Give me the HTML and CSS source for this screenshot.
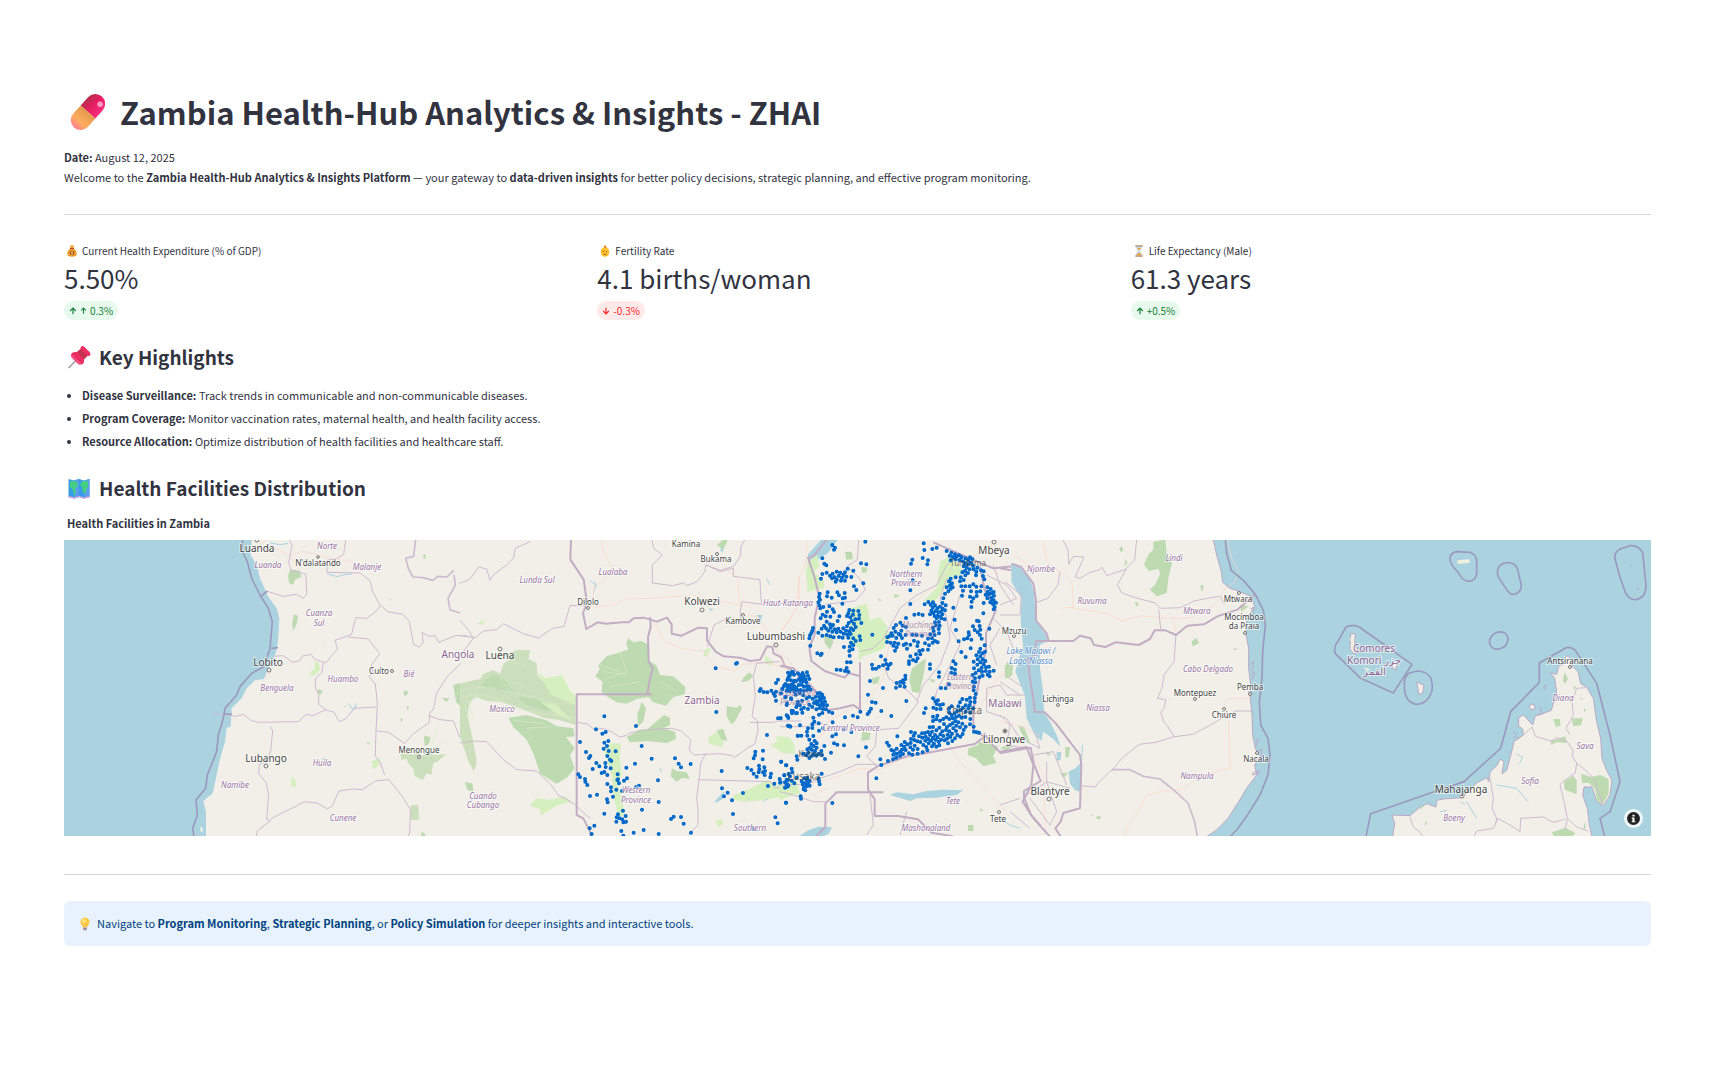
FILE: index.html
```html
<!DOCTYPE html>
<html lang="en">
<head>
<meta charset="utf-8">
<meta name="viewport" content="width=device-width, initial-scale=1">
<title>Zambia Health-Hub Analytics &amp; Insights - ZHAI</title>
<link rel="stylesheet" href="styles.css">
</head>
<body>
<main class="page">
  <h1 class="title">
    <svg class="title-icon" viewBox="0 0 42 42" aria-hidden="true">
      <defs>
        <linearGradient id="pill-red" x1="0" y1="0" x2="1" y2="0"><stop offset="0" stop-color="#b52f4c"/><stop offset=".5" stop-color="#ea1c62"/><stop offset="1" stop-color="#f5317f"/></linearGradient>
        <linearGradient id="pill-orange" x1="0" y1="0" x2="0" y2="1"><stop offset="0" stop-color="#e39a4c"/><stop offset=".6" stop-color="#ffac5e"/><stop offset="1" stop-color="#ff7f92"/></linearGradient>
      </defs>
      <g transform="rotate(42 21 21)">
        <path d="M12 21V11a9 9 0 0 1 18 0V21z" fill="url(#pill-red)"/>
        <path d="M12 21v10a9 9 0 0 0 18 0V21z" fill="url(#pill-orange)"/>
      </g>
      <circle cx="32" cy="14" r="2.500" fill="#ff9cc4"/>
    </svg>
    <span>Zambia Health-Hub Analytics &amp; Insights - ZHAI</span>
  </h1>
  <p class="intro"><strong>Date:</strong> August 12, 2025<br>Welcome to the <strong>Zambia Health-Hub Analytics &amp; Insights Platform</strong> — your gateway to <strong>data-driven insights</strong> for better policy decisions, strategic planning, and effective program monitoring.</p>
  <hr class="rule">

  <section class="metrics" aria-label="Key metrics">
    <div class="metric">
      <p class="metric-label">
        <svg class="emoji-small" viewBox="0 0 12 12" aria-hidden="true"><path d="M4 .5h4L7.500 3.500C10 5 11 7 10.700 9.500 10.500 11 9 11.700 6 11.700S1.500 11 1.300 9.500C1 7 2 5 4.500 3.500z" fill="#eda02f"/><path d="M4 3h4v1H4z" fill="#b5452c"/><circle cx="6" cy="7.800" r="2.400" fill="#a55a24"/><path d="M7 6.700c-2-1-2.200 1-1 1.100s1 2-1 1.100M6 6v3.600" fill="none" stroke="#ffd05a" stroke-width=".6"/></svg>
        Current Health Expenditure (% of GDP)</p>
      <p class="metric-value">5.50%</p>
      <p class="delta delta-up"><svg class="arrow" viewBox="0 0 10 10" aria-hidden="true"><path d="M5 9V1.500M1.500 5 5 1.500 8.500 5"/></svg><svg class="arrow arrow-small" viewBox="0 0 10 10" aria-hidden="true"><path d="M5 9.500V1.500M1.500 5 5 1.500 8.500 5"/></svg>0.3%</p>
    </div>
    <div class="metric">
      <p class="metric-label">
        <svg class="emoji-small" viewBox="0 0 12 12" aria-hidden="true"><ellipse cx="6" cy="7" rx="4.300" ry="4.800" fill="#fcc02e"/><path d="M6 3C4 2 5 .5 6.500 0 6 1 8 1.500 7.500 3z" fill="#d98a28"/><path d="M4 6.500h1M7 6.500h1M4.800 9q1.200 1 2.400 0" fill="none" stroke="#6d3c22" stroke-width=".8"/></svg>
        Fertility Rate</p>
      <p class="metric-value">4.1 births/woman</p>
      <p class="delta delta-down"><svg class="arrow" viewBox="0 0 10 10" aria-hidden="true"><path d="M5 1v7.500M1.500 5 5 8.500 8.500 5"/></svg>-0.3%</p>
    </div>
    <div class="metric">
      <p class="metric-label">
        <svg class="emoji-small" viewBox="0 0 12 12" aria-hidden="true"><path d="M3 1.500h6c0 3-2 3.500-2 4.500s2 1.500 2 4.500H3C3 7.500 5 7 5 6S3 4.500 3 1.500z" fill="#bfdcec"/><path d="M4 3h4L6 5.500zM3.500 10c0-1.500 1.500-2 2.500-2s2.500.5 2.500 2z" fill="#f2a63a"/><path d="M2.300.300h7.400v1.400H2.300zM2.300 10.300h7.400v1.400H2.300z" fill="#b98d6b"/></svg>
        Life Expectancy (Male)</p>
      <p class="metric-value">61.3 years</p>
      <p class="delta delta-up"><svg class="arrow" viewBox="0 0 10 10" aria-hidden="true"><path d="M5 9V1.500M1.500 5 5 1.500 8.500 5"/></svg>+0.5%</p>
    </div>
  </section>

  <h2 class="heading">
    <svg class="heading-icon" viewBox="0 0 24 24" aria-hidden="true"><path d="M1.500 23 11 13.500" stroke="#a39aa8" stroke-width="1.600"/><path d="M13.500 2.500q1-2.500 3.500-1l6 6q1.500 2.500-1 3.500l-2-.2-3 3.200q.5 5-2.500 5.500L4 9.500q.5-3 6-2.500l3.500-3z" fill="#ee2d63"/><path d="m13.500 4 7 7-3.500 3.500L10 7z" fill="#c53451"/><path d="M4 9.500 14.500 19.500q-2 1-4-1L5 13q-2-2-1-3.500z" fill="#f5467c"/></svg>
    <span>Key Highlights</span>
  </h2>
  <ul class="highlights">
    <li><strong>Disease Surveillance:</strong> Track trends in communicable and non-communicable diseases.</li>
    <li><strong>Program Coverage:</strong> Monitor vaccination rates, maternal health, and health facility access.</li>
    <li><strong>Resource Allocation:</strong> Optimize distribution of health facilities and healthcare staff.</li>
  </ul>

  <h2 class="heading heading-map">
    <svg class="heading-icon" viewBox="0 0 24 24" aria-hidden="true"><path d="M1.500 3 7 4.500 12 3l5 1.500L22.500 3v18L17 22.500 12 21l-5 1.500L1.500 21z" fill="#399ce8"/><path d="M7 4.500 12 3v18l-5 1.500zM17 4.500 22.500 3v18L17 22.500z" fill="#5b9df0"/><path d="M1.500 20.500 7 22l5-1.500 5 1.500 5.500-1.500" fill="none" stroke="#c8a4dc" stroke-width="1.300"/><path d="M3 6q3-2 7 0l1 4-3 3 1 3-2 4-1-6-3-3zM13 9l2-4h6v6l-2 3v4l-3-2-1-5z" fill="#43cf83"/></svg>
    <span>Health Facilities Distribution</span>
  </h2>

  <figure class="map">
    <figcaption class="map-title">Health Facilities in Zambia</figcaption>
    <div class="map-frame">
    <svg class="map-canvas" viewBox="64 540 1587 296" role="img" aria-label="Map of health facilities in Zambia">
      <rect class="land" x="64" y="540" width="1587" height="296"/>

      <!-- Angola and the Atlantic coast -->
      <g transform="translate(60 535) scale(.33333)">
        <path class="water" d="M12 14H575L572 60 590 90 600 130 625 185 650 220 658 250 655 310 650 345 640 375 625 400 612 432 585 436 560 460 545 490 515 520 512 575 500 578 495 620 478 680 470 720 458 775 430 798 438 830V905H12z"/>
        <path class="stream" d="M630 24l30 5 25-4M802 117l30 8 20-6 25-3M865 505l15 20 8-10M880 525l10-20M780 680l15-15"/>
        <path class="wood" d="M690 105l30 2 4 20-18 6-6 16-12-3-4-22zM702 238l12 4-4 25-10 20-4-20zM1090 58l8 2-2 12-6-2zM775 462l14 6-8 12-10-6zM1033 465l12 6-8 14-6-8zM1040 512l8 4-6 10zM1022 548l8 6-8 6zM920 620l10 4-6 6zM1092 602l20 4-6 22-12 6zM1145 488l24 2-10 12zM1180 450l20-6v70l-12-14zM988 190l6 4-5 3zM858 515l-12 4 10-6zM1085 890l12 8-2 7-12-2z"/>
        <path class="wood sparse" d="M1022 655l40 4 10-16 14 20 24-22 10 20 40-4-26 22-14 6-6 34-14-4-12 20-24-12-4-22-16-18-4-12-16 4z"/>
        <path class="wood sparse" d="M1052 810h22l4 44-28 1z"/>
        <path class="grass" d="M765 378l12 6 3 20-14 16-16 4 4-16 10-6zM695 722l14 20-2 14-14-4zM935 680l24-12 2 16-20 20zM790 315l6 6-4 6zM597 470l8 4-4 8z"/>
        <path class="scrub" d="M1090 600l20-24M1110 640l26-70M1100 650l60-30"/>
        <path class="road" d="M585 14l20 14 10-12M595 35l60 10 35 15 40-12 60 16 90 18M690 60l30 50M612 432l20-22"/>
        <path class="admin" d="M688 14l8 18-10 50 6 22 46 14 2 60-10 12-20-12-40 6-48-15-24 14M857 14l-6 44-20 12-30 6 0 36 100 2 30 24 6 30 24 44-10 14-30 24-34-2-12 50-50 18 8 26-20 22-15 20-35-12-10-14-26 5-8 14-22 5-12-10-16-10-30 2M865 306l60 6 34 44-24 34 4 22-12 12 20 26M790 382l-4 30-20 20 0 26 10 20 0 30 22 16-40 18-20-4-22 22-120 2-20-4-26-20-24 6-32-6-34-1M797 524l26 8 14 28 20-8 26-32 65-4M630 573l8 15-6 60-10 28-24 12-2 28 22 26 8 36-6 75 12 4-40 30-4 26M632 852l30-16 30-14 40-22 40 4 30 18 15-10 20-44 40-6 30 2 40-26 40-4 40 50 24 40-2 70-18 36"/>
        <path class="admin" d="M946 446l6 60-4 82-2 76 14 16 14 40M950 588l36 4 22 16 26 18 24-28 50-36 2-30 10-8 10-50 32-50 42-40M1106 542l34 12 40 4 20 50M962 210l20 20 46 8 20 20 12 70 18 8 12-14-4-30 20 12 20-2 10 20 50-20h34"/>
        <path class="admin strong-admin" d="M1067 14l-6 50-24 6 8 30 14 26 30 2 30 8 14-12 28 2 20-20M1182 120l4 30-22 40 6 34 30 10"/>
        <path class="sea-border" d="M548 14l-3 31 17 35 13 50 25 50 25 40 12 40-7 80-18 55-37 20-35 40-10 25-35 40-5 30-15 50-5 50-28 70-5 40-29 35 4 45-14 40 4 25M606 182l16-14M634 340l20-2M494 537h22"/>
        <path class="islet" d="M420 876l8 2v14l-6-2z"/>
      </g>

      <!-- Eastern Angola, Katanga, western Zambia -->
      <g transform="translate(460 535) scale(.33333)">
        <path class="wood" d="M505 310L520 322 545 318 566 330 566 376 590 392 600 420 640 424 676 456 674 478 640 486 618 512 580 502 565 486 530 492 500 506 470 502 440 484 425 470 428 440 406 424 420 402 414 392 440 364 480 352 505 344 498 326z"/>
        <path class="wood" d="M545 500L558 520 550 560 534 574 532 540zM560 584L612 540 630 548 630 570 600 584zM500 606L540 584 610 580 646 590 648 612 620 624 560 618 510 622zM800 514l30 4 10-8 6 10-22 40-10 8-14-24zM850 428l18-16 12 12-16 14-20 4zM770 586l20-4 12 36-18-4zM636 700l14 8 30 4 10 20-24-4-16 12-18-16z"/>
        <path class="wood" d="M145 548L200 540 260 556 290 574 340 580 344 604 318 606 344 640 330 660 344 700 320 728 290 746 240 716 222 660 200 614 160 576zM14 740l24 6 2 24-18-6zM770 30l20-16h14l-14 30z"/>
        <path class="wood sparse" d="M0 446L20 440 60 432 70 416 100 406 120 416 132 384 150 374 130 360 175 344 210 346 206 372 230 384 232 420 260 450 300 460 330 480 346 500 346 570 300 556 250 548 180 520 120 500 80 498 50 486 30 500 22 540 40 620 50 680 42 710 26 680 0 604z"/>
        <path class="wood" d="M170 486L230 492 290 520 260 528 200 510zM60 450L100 416 140 440 160 470 110 468z"/>
        <path class="grass" d="M232 410l24 20 50-10 20 40 24 30-6 20-70-30-30-50zM240 500l50 10 50 50-50-24zM455 624l28 2-4 40 6 50-10 40 14 44 2 42-16 4-14-60-4-60-16-50-10-30zM932 630l20-10-4-16 26 4 28 20 4 30-40-6zM745 606l26-14 20 30-4 14-40-10zM228 790l36 4 50-10 20 16-40 10-50 30-8-20-26-6zM765 856l20-4 6 14-14 12zM735 342l20-4-14 24-12 4zM820 780l40-14 60-30 30 16 60-16 10 40-60 10-50 10-60 4-30-6zM50 266l24-10-6 14zM915 360l24 20-6 14-18-10z"/>
        <path class="scrub" d="M0 470c60-30 130 0 190 10s90 40 150 20M0 490c50-20 90-10 150 20s100 20 190 40M10 500l20 50M20 490l20 60M120 430l30 40M160 440l60 30M60 450l-30 60M140 380l60 10M10 460l50 30M160 556l90 10M200 580l80-6M420 390l60 20M430 410l70 10M440 430l60-20M480 350l20 60M450 455l90-15M600 440l50 30"/>
        <path class="water" d="M762 802l30-34-4 24-18 10zM780 44l10-10-2 20zM890 240h18l-6 16zM745 220l16 2-6 6z"/>
        <path class="stream" d="M390 136l16 14-4 20M404 140l6 16M910 800l14-10M920 130l10 20M714 170l4 4M600 700l4 10"/>
        <path class="road" d="M425 14l6 40 26 44-20 30-34 30-8 40 0 18 60-4 40-20 80-2 120-10 60 14 80 14 40 10M776 60l30 50 28 20 4 70 6 36 50 10 40 60 14 40 30 20 30 40M575 250l40 70 50 20 70 10 30 44 60 14 20-20 80-4 60 20 30 10M1018 120v80l-20 40-40 60-10 26"/>
        <path class="admin" d="M210 20l-44 20-6 30-20 20-40 30-10 16-10-34-24-6-26 36-32 14M330 212h50M330 212l-18 62-34 6-30 20-10 10-48-14-60-30-20 18-40 4-24 20-46-6M0 256l26 30 14 24-30 40-10 10M575 14l6 26 26 20-30 30 0 54 60 8 34-8 10 8 30-12 24-30 2-20 44 16 40-12 20-30 2-30 24-40M740 90l40 20 40-10 0 24 80 10 2 50 4 24-60-8-6 30 4 30-16 0-18-14-48 24-20 64M0 624l44-6 36 2 50 54 40 30 60 4 42 40 24 34 22 10 26 16 42 40 6 0"/>
        <path class="admin" d="M350 562l30 4 24 18 24-4 30 12 20 14 20-4 12-8 34-8 50-4 40-2 30 8 28 26-4 30 14 16 36-2 40-2 40 6 6 6 40-30 20-10 10-40-2-30-16-14 10-60-6-60 10-40 70-4M738 654l-16 30-4 46-8 60 4 30 0 50-30 30M712 734l220 6 14 20 30-10 44-2M870 562h70l16-4h66"/>
        <path class="nation" d="M333 14l-2 60 40 60 10 70-12 30 10 48 34-20 24 4 50-4 20 0 14-12 30-2 40 12 30-12 14 20 0 28 30 6 50-24 26 2 0 36 26 34 24 14 50 4 30 10 30-4 20-40 16 2 4 20 22 10 10 24 30 24 28 20M570 246l2 30-8 30 2 74 12 20-10 40-6 34 12 4H350v362l20 10 20 40 4 20"/>
      </g>

      <!-- Northern and central Zambia, lakes, Malawi -->
      <g transform="translate(780 535) scale(.33333)">
        <path class="water" d="M84 58l40-44h50l-30 40-24 16-20 16-14-6zM225 240l30-6 10 20-6 30-24 22-24-6 4-24zM330 780l20-8 50 6 40-10 50-4 60 2-20 14-60 8-60 2-20 8zM56 905l30-20 30-10 40 2-10 20-24 10z"/>
        <path class="grass" d="M82 80l30-20 6 36-16 14 30 30 0 20-50 10 0-24-4-30zM480 80l30-18 44 50-40 20-30 40-20 30-34-4 40-40zM210 220l50-14 10 50 30-10 20 26 10 40-20 30-60 22-12 14-4-40-24-24zM0 604l30 4 14 24-20 24-24-4zM0 750l40 30-40 16z"/>
        <path class="wood" d="M396 400l42-30-6 44-14 60-22-4-8-36zM195 50h20l4 22-20 2zM132 300l20 0 8 20-10 24-16-20zM246 590l26 4-4 20-24 4zM565 640l30-10 0-10 60 14-16 30 10 20-40 10-20-24-26-10zM680 380l20 10-4 30-20-14zM276 430l24-6-6 20-16 4zM292 190l12 4-4 6zM340 178l20 2-14 10zM564 870h16v18h-16zM244 96l18 2-2 14-14 2zM600 820l10 4-8 6zM446 432l20 2-6 10z"/>
        <path class="road" d="M84 14l-10 80-18 40-4 80-50 80M0 370l40 50 60 60 60 90-80 70-70 110M640 14l-10 30-60 24-60 0M700 60l60 40 50 10M130 570l80-50 50-20 50-70 20-120 60-100 80-60 80-90M60 750l100-20 80-30 60 4 60-30 100-40 70-40 60-60 60-100 70-70 60-20M500 620l40 60 60 60 50 60 30 30M100 780l40-20"/>
        <path class="admin" d="M236 14l-4 60-30 20 40 40 14 30-30 34-90 10M240 350l40-10 30-30 50-90 50-40 60-30 30-60 40-30M240 384l0 140M312 390l14 40 60 40 30 30-60 80-60 4M0 575l80 0 50-10M290 584l-4 50-26 30 30 30M290 688l-60 0-50 22-60 20-40 20M500 130l-20 60 20 60 10 60-30 80-50 60-20 50M540 180l-30 100 30 50-30 60-40 80-10 40M620 120l60 30 30 40-50 20M640 250l40 40 24 60-30 70 60 40M620 460l40-10 20 30 60 0 40 60-20 40 20 60-60-30-40-60-60-20zM0 770l40 10 60 20 40 0M270 780l10 90-20 30M380 830l-20 70M640 90l20 60 40 60M660 280l-30 50 20 60"/>
        <path class="nation" d="M140 14l-40 50-16 4 20 60 14 60-14 60 0 50-16 40 6 40 40 30 60 20 12-14 34 10 0-40V524l-20-14-40 10-40 6-10-26-30-40-60-60-40-8M460 22l100 44 80 34 60-6 0 6M600 95l14 70 34 60-30 70 0 50-14 60-24 120 0 60 34 20-30 22-140 26-60 10-90 30-30 20 0 50 20 30 0 50 70 0 60 10 40 40 60 10 40 20M612 594l20 30 30 30 90-16 10 50 20 50-50 30 0 20 20 50 30 35M310 772l-140 0-34 34 0 70-30 30"/>
        <path class="dot" d="M157 30h0M165 38h0M162 44h0M256 20h0M127 70h0M133 86h0M139 91h0M203 101h0M243 85h0M259 88h0M220 107h0M127 117h0M123 131h0M140 113h0M150 122h0M158 116h0M164 127h0M170 110h0M176 123h0M181 113h0M186 128h0M191 119h0M195 112h0M199 125h0M183 137h0M170 134h0M167 140h0M156 130h0M214 126h0M195 137h0M250 145h0M222 154h0M229 165h0M119 176h0M117 186h0M120 194h0M115 202h0M118 211h0M121 220h0M130 216h0M141 184h0M143 172h0M155 188h0M172 172h0M177 181h0M188 190h0M194 174h0M187 206h0M195 188h0M158 223h0M148 214h0M141 230h0M128 239h0M137 244h0M122 250h0M151 245h0M162 231h0M178 244h0M173 258h0M140 260h0M150 268h0M132 272h0M125 281h0M138 280h0M145 287h0M152 278h0M159 270h0M157 290h0M164 283h0M170 292h0M175 281h0M182 290h0M190 280h0M191 296h0M198 287h0M202 299h0M208 289h0M213 280h0M201 274h0M212 297h0M220 285h0M206 264h0M215 258h0M222 266h0M227 276h0M211 247h0M201 243h0M208 225h0M205 235h0M220 227h0M219 239h0M235 228h0M238 240h0M226 253h0M237 251h0M244 264h0M99 279h0M97 287h0M94 294h0M90 301h0M88 310h0M91 332h0M115 293h0M127 302h0M140 300h0M151 304h0M161 307h0M177 306h0M188 308h0M205 308h0M220 310h0M227 318h0M239 304h0M241 315h0M220 330h0M213 323h0M209 335h0M218 343h0M208 348h0M209 362h0M192 336h0M112 355h0M122 360h0M125 356h0M201 382h0M212 382h0M200 399h0M205 410h0M195 408h0M182 405h0M170 404h0M277 299h0M431 25h0M433 45h0M457 42h0M470 38h0M397 74h0M393 86h0M428 69h0M444 76h0M442 88h0M398 136h0M391 166h0M391 207h0M500 48h0M514 53h0M509 62h0M519 66h0M525 58h0M530 64h0M537 61h0M545 66h0M512 76h0M527 73h0M539 75h0M549 79h0M557 70h0M565 75h0M570 67h0M577 72h0M555 85h0M565 88h0M573 83h0M579 92h0M551 94h0M560 98h0M569 103h0M555 108h0M547 112h0M564 114h0M556 121h0M581 103h0M589 110h0M588 121h0M603 106h0M611 109h0M609 123h0M613 133h0M592 98h0M542 127h0M551 135h0M527 127h0M512 131h0M507 139h0M516 145h0M510 151h0M500 157h0M512 161h0M505 169h0M495 176h0M518 157h0M540 139h0M544 154h0M556 154h0M569 154h0M580 148h0M549 167h0M573 169h0M590 171h0M570 185h0M580 190h0M546 182h0M590 183h0M575 200h0M589 155h0M601 169h0M604 154h0M617 179h0M622 157h0M632 162h0M623 170h0M627 178h0M634 174h0M641 171h0M642 182h0M634 188h0M641 196h0M648 203h0M639 207h0M644 216h0M631 202h0M622 190h0M641 223h0M635 194h0M611 204h0M574 216h0M520 218h0M490 190h0M487 204h0M497 211h0M434 208h0M445 201h0M452 209h0M459 202h0M465 211h0M458 218h0M472 220h0M480 215h0M488 221h0M467 228h0M475 232h0M483 230h0M460 234h0M454 227h0M450 238h0M464 243h0M473 242h0M481 245h0M487 238h0M495 226h0M470 250h0M484 250h0M494 253h0M465 262h0M477 261h0M479 272h0M468 271h0M459 278h0M476 282h0M461 289h0M451 298h0M464 300h0M477 295h0M456 310h0M465 318h0M473 322h0M458 323h0M447 331h0M444 311h0M416 237h0M428 240h0M403 239h0M378 249h0M361 263h0M368 272h0M378 276h0M348 270h0M341 279h0M346 290h0M334 295h0M328 304h0M322 307h0M338 302h0M349 309h0M356 297h0M364 287h0M377 300h0M366 309h0M361 300h0M321 321h0M332 323h0M344 323h0M340 332h0M350 337h0M345 347h0M355 326h0M371 330h0M381 341h0M378 326h0M391 329h0M402 317h0M409 300h0M397 299h0M414 322h0M426 302h0M412 333h0M428 345h0M444 344h0M435 325h0M418 348h0M421 358h0M408 358h0M413 370h0M408 379h0M391 364h0M399 375h0M387 387h0M387 379h0M303 364h0M316 375h0M309 391h0M319 387h0M326 391h0M332 386h0M297 395h0M288 401h0M276 389h0M278 401h0M323 401h0M270 438h0M264 479h0M276 501h0M287 503h0M268 530h0M263 537h0M273 521h0M304 528h0M334 543h0M309 459h0M379 498h0M360 453h0M348 458h0M350 444h0M361 441h0M369 436h0M376 432h0M376 422h0M371 444h0M374 455h0M450 388h0M450 401h0M477 412h0M477 425h0M483 459h0M497 460h0M507 448h0M515 399h0M525 404h0M514 413h0M525 416h0M527 387h0M520 379h0M544 351h0M557 366h0M536 319h0M528 285h0M524 254h0M610 235h0M591 257h0M596 259h0M579 274h0M599 273h0M566 292h0M584 285h0M593 292h0M601 284h0M628 281h0M567 300h0M600 300h0M552 313h0M562 310h0M574 314h0M605 311h0M614 331h0M601 341h0M572 340h0M615 350h0M608 355h0M597 351h0M589 361h0M601 364h0M593 373h0M608 373h0M581 380h0M601 382h0M616 378h0M592 389h0M611 388h0M605 398h0M618 397h0M627 395h0M596 406h0M582 400h0M587 414h0M606 410h0M617 408h0M629 410h0M641 407h0M623 419h0M608 422h0M598 427h0M629 424h0M585 430h0M578 420h0M578 440h0M586 442h0M582 455h0M581 466h0M587 477h0M584 489h0M570 488h0M584 501h0M560 494h0M571 501h0M557 511h0M569 511h0M579 520h0M565 520h0M549 518h0M557 530h0M571 533h0M547 492h0M540 502h0M535 514h0M542 525h0M532 528h0M524 535h0M515 541h0M508 533h0M507 521h0M515 514h0M459 490h0M466 499h0M474 496h0M470 507h0M480 510h0M482 522h0M489 508h0M470 522h0M460 518h0M437 520h0M432 534h0M459 545h0M472 542h0M459 558h0M469 553h0M480 557h0M490 552h0M499 547h0M508 552h0M518 550h0M528 546h0M537 542h0M545 548h0M556 546h0M571 552h0M570 568h0M581 575h0M582 590h0M590 592h0M597 593h0M547 566h0M557 575h0M551 585h0M548 597h0M540 577h0M535 562h0M526 558h0M529 572h0M518 565h0M510 570h0M520 580h0M501 576h0M492 567h0M498 585h0M508 589h0M516 596h0M528 588h0M532 600h0M541 605h0M525 610h0M517 618h0M511 606h0M503 599h0M501 611h0M504 625h0M494 616h0M490 603h0M481 598h0M487 589h0M478 578h0M469 586h0M459 576h0M449 577h0M456 590h0M465 600h0M473 607h0M483 614h0M476 620h0M467 614h0M459 608h0M450 600h0M444 591h0M435 594h0M426 595h0M437 605h0M445 612h0M454 617h0M462 626h0M469 635h0M478 631h0M456 634h0M446 625h0M436 617h0M427 608h0M417 604h0M405 594h0M393 591h0M401 602h0M393 612h0M403 615h0M412 619h0M421 621h0M430 630h0M439 636h0M442 646h0M428 652h0M413 656h0M413 642h0M404 632h0M392 624h0M382 628h0M391 637h0M399 644h0M397 659h0M387 655h0M377 645h0M373 635h0M374 621h0M364 630h0M366 644h0M369 657h0M360 651h0M350 641h0M341 648h0M350 656h0M360 663h0M349 668h0M339 673h0M340 659h0M334 645h0M327 632h0M321 623h0M352 604h0M301 673h0M304 690h0M324 678h0M289 730h0M258 637h0M235 664h0M192 631h0M172 629h0M162 625h0M153 653h0M135 672h0M168 598h0M157 604h0M191 584h0M214 591h0M195 547h0M219 542h0M233 547h0M241 530h0M158 562h0M157 534h0M157 804h0M125 716h0M117 739h0M119 748h0M116 731h0M62 784h0M63 791h0M18 803h0M18 691h0M3 680h0M35 701h0M26 717h0M13 721h0M20 734h0M15 742h0M24 754h0M15 758h0M21 748h0M2 742h0M35 737h0M43 745h0M65 739h0M73 730h0M81 735h0M68 748h0M76 744h0M84 746h0M72 757h0M80 754h0M89 752h0M76 766h0M89 738h0M82 728h0M37 712h0M71 763h0M50 728h0"/>
        <path class="dot" d="M24 413h0M36 411h0M42 419h0M30 421h0M54 415h0M60 421h0M68 414h0M81 412h0M84 422h0M72 422h0M66 428h0M76 432h0M57 432h0M26 426h0M22 435h0M33 436h0M41 441h0M48 438h0M61 438h0M69 439h0M88 432h0M79 442h0M35 449h0M43 454h0M27 451h0M17 447h0M12 453h0M24 458h0M32 462h0M39 463h0M48 458h0M56 450h0M65 449h0M72 455h0M81 453h0M87 456h0M20 467h0M7 462h0M29 469h0M44 470h0M52 466h0M62 465h0M72 468h0M81 465h0M92 464h0M59 474h0M47 479h0M17 485h0M33 490h0M70 481h0M80 490h0M66 497h0M54 500h0M88 485h0M98 491h0M107 485h0M113 475h0M120 474h0M127 479h0M118 486h0M125 490h0M132 489h0M117 497h0M108 499h0M126 501h0M135 500h0M112 508h0M121 510h0M130 511h0M141 511h0M119 519h0M129 522h0M138 523h0M147 530h0M109 523h0M97 516h0M88 509h0M102 504h0M84 522h0M72 518h0M60 511h0M49 516h0M39 528h0M36 535h0M51 534h0M67 533h0M64 523h0M21 505h0M20 541h0M25 549h0M2 550h0M24 572h0M30 574h0M60 571h0M100 548h0M117 539h0M127 534h0M103 560h0M116 565h0M97 568h0M97 579h0M84 580h0M117 587h0M81 590h0M82 602h0M64 602h0M53 602h0M100 603h0M88 614h0M104 618h0M110 625h0M94 627h0M101 633h0M110 638h0M90 638h0M82 643h0M95 644h0M105 648h0M85 653h0M101 657h0M124 648h0M133 633h0M129 580h0M116 657h0M109 662h0M88 669h0M70 656h0M79 661h0M50 664h0M52 674h0M96 662h0M126 660h0"/>
      </g>

      <!-- Western Zambia facilities -->
      <g transform="translate(460 535) scale(.33333)">
        <path class="dot" d="M767 400h0M828 386h0M831 384h0M769 531h0M433 544h0M528 573h0M408 583h0M427 596h0M437 591h0M360 621h0M433 623h0M445 618h0M441 633h0M431 641h0M446 648h0M467 649h0M545 633h0M378 651h0M391 663h0M387 669h0M442 663h0M450 674h0M454 678h0M436 684h0M409 684h0M418 694h0M398 702h0M437 696h0M452 700h0M425 714h0M433 711h0M442 720h0M473 718h0M474 733h0M477 745h0M472 735h0M499 698h0M525 686h0M575 671h0M645 670h0M656 686h0M663 697h0M692 687h0M594 736h0M501 730h0M492 737h0M537 752h0M528 757h0M355 718h0M360 726h0M375 732h0M376 740h0M382 750h0M442 747h0M453 757h0M453 769h0M469 764h0M486 768h0M411 779h0M390 783h0M459 785h0M441 793h0M443 802h0M433 836h0M546 824h0M596 801h0M489 827h0M474 838h0M470 847h0M478 850h0M487 853h0M497 843h0M469 860h0M490 862h0M498 860h0M403 872h0M389 880h0M395 897h0M484 888h0M490 902h0M521 893h0M551 885h0M596 897h0M633 852h0M641 845h0M663 846h0M671 866h0M693 893h0M785 708h0M786 760h0M803 773h0M792 784h0M816 796h0M849 774h0M819 837h0M880 883h0M946 847h0M953 865h0M978 803h0M921 600h0M1014 602h0M886 650h0M909 647h0M885 661h0M881 670h0M908 673h0M964 680h0M979 691h0M862 699h0M874 705h0M881 716h0M890 725h0M897 692h0M898 703h0M896 712h0M913 697h0M915 708h0M914 720h0M909 712h0M933 716h0M931 727h0M924 753h0M943 746h0M959 732h0M960 743h0M973 721h0M979 746h0M980 756h0M984 735h0M990 724h0M985 751h0M902 462h0M899 468h0M911 471h0M922 472h0M934 467h0M941 476h0M948 470h0M945 483h0M948 497h0M954 434h0M948 444h0M967 461h0M975 449h0M963 475h0M976 487h0M983 457h0M980 510h0M995 527h0M983 544h0M954 550h0M961 550h0M985 572h0M991 575h0M1008 535h0M1012 508h0M994 492h0M985 428h0M989 416h0M999 411h0M1003 437h0M996 453h0M1010 463h0"/>
      </g>

      <!-- Tanzania, Mozambique, Lake Malawi -->
      <g transform="translate(1000 535) scale(.33333)">
        <path class="water" d="M640 14L650 60 664 110 668 142 690 160 720 170 752 184 764 214 740 250 738 300 746 340 746 400 752 450 750 480 756 540 758 600 766 640 780 664 764 690 770 720 740 760 716 800 684 850 650 885 620 905H990V14z"/>
        <path class="water" d="M34 90L52 88 90 132 102 172 108 256 140 304 142 318 120 330 120 400 128 460 132 530 150 560 170 600 182 636 160 612 130 590 124 618 104 600 80 550 74 480 46 410 56 370 70 340 62 260 64 190 34 140zM206 710l20-10 20-20-6 90-14-4-16-20zM170 650l14 2-2 22-12 4z"/>
        <path class="stream" d="M248 630l-4 50M0 850l30 20 30 10"/>
        <path class="wood" d="M460 20l36-6 4 40 16 30-10 40-6 50-30 10-20-20 16-16 14-30-4-16-30 6-14-20 14-30 14-14zM574 320l14-12 10 16-20 10zM600 150l12 2-6 20zM376 70l6 14-8 12zM404 200l12 4-6 12zM358 40l8-6 4 12-8 6zM196 636l14 0-4 30-10 2zM140 648l14 14-14-2zM180 716l24-4-10 16zM14 390l22 6 0 26-20 10zM56 570l16 6 20 50-10-6-20-30zM0 640l20-10 20 4-20 12zM274 836l6 4-6 4zM290 844h12v8h-12zM720 210l26 4-22 16zM700 340l14 2-10 4z"/>
        <path class="road" d="M180 110l36 30 4 76-34 4M216 218l60 10 50 10 40 20 60-16 60 8 80 0 80-40 30-50 30-20 10-30-20-40-16-60M130 20l10 60 40 30M514 250l14 30-8 20M690 700l-4-140-14-30 8-40 70 0M690 700l-30 4-80 36-30 20-70 10-40 10-20 40-40 60-6 25M100 660l30 60 4 100 2 80M0 560l60 14 60 30M100 60l-20 20"/>
        <path class="admin" d="M188 14l16 30 2 44 14-24 32 2-26 60 14 4 30-18 30-8 6-8 14 26 60-20M410 14l-6 60-24 26-28 50 14 24 40 14 60 16 16 16 60-2 40-20 50-10 30-4 8 20 20-6 30-24M476 222l6 60M528 300l-6 80-30 40-6 40-14 30 26 4-6 26-10 12 10 30 10 10 20 32M518 606l60-8 50-26 40-24 40-20h50M518 606l-50 16-50 6-50 40-34 40M336 704l-40 38-10 14-46-4M180 110l-6 40-30 40-40 14M0 240l60 0 4-60-50-40M0 540l30 30-10 60 60 10M100 660l60-10 40 100M80 780l60-40 70 20M90 790l60 80 20-40-30-90 0-60M0 810l60-20M30 830l60 50M0 440l60 40"/>
        <path class="nation" d="M0 100L34 106M34 86L64 96 100 146 108 196 108 256 140 296 146 318 108 318 108 360 84 372 90 430 100 490 104 530 134 532 168 566 200 608 240 660 244 690 240 820 190 834 182 860 166 880 182 905M108 318L220 318 240 302 272 310 282 330 316 336 346 322 416 330 450 312 464 286 496 286 528 300 562 272 612 268 652 244 712 224 764 180M0 650L80 636 100 690 94 750 68 800 100 850 150 905"/>
        <path class="admin strong-admin" d="M336 704L390 704 430 724 480 732 520 764 564 804 584 860 592 905"/>
        <path class="coast" d="M640 14L650 60 664 110 668 142 690 160 720 170 752 184 764 214 740 250 738 300 746 340 746 400 752 450 750 480 756 540 758 600 766 640 780 664 764 690 770 720 740 760 716 800 684 850 650 885 620 905M745 250l14-10 4-24-12 6M750 390l12-12-6 30M752 420l12-8-8 24M744 470l16 8M766 620l10-8-8 20M768 650l16-8 2 26-18 4M756 716l24-10-4 10-20 4"/>
        <path class="sea-border" d="M676 14L680 54 694 106 730 136 766 178 790 226 796 270 788 350 786 430 778 500 782 570 804 610 810 660 804 720 780 780 740 844 710 885 690 905"/>
      </g>

      <!-- Comoros and Madagascar -->
      <g transform="translate(1310 535) scale(.33333)">
        <rect class="water" x="0" y="14" width="1026" height="891"/>
        <path class="land coast-land" d="M248 905L254 865 246 840 300 842 326 820 350 806 378 816 380 796 400 792 456 788 500 744 530 728 536 740 540 712 562 690 570 672 582 680 576 716 590 706 602 662 612 620 640 600 638 582 626 574 626 548 640 540 668 570 676 542 694 538 724 526 740 470 734 430 722 414 740 418 746 394 770 382 766 366 776 362 784 390 804 410 812 446 830 456 850 490 860 560 872 610 876 670 890 706 906 736 900 780 880 812 860 798 846 756 822 756 818 780 832 820 838 870 846 905z"/>
        <path class="land coast-land" d="M122 296h14l-2 30 12 24-14 6-12-14zM662 506l14 6-6 14-12-8zM320 440l10 6 12 4-4 24-12 4-2-18zM246 388l14-2-2 20-12-10z"/>
        <path class="islet" d="M442 76l36-3 2 10-36 4zM160 396l24 8-14 4zM120 310l8 2 6 30-8-4z"/>
        <path class="wood" d="M762 740L790 722 800 736 800 778 764 764zM814 716L844 726 870 720 896 732 896 776 878 808 862 796 854 760 836 744 816 744zM764 412l10 20-8 14-8-8zM730 552l20 0 2 20-14 4zM784 550l34 0-4 20-24 4zM720 620l46-16 4 20-30-2-16 8zM790 450l8 8-6 8zM726 892l40-14 30 16-10 11h-54zM824 860l4 20-8 2zM346 858l6 8-8 6zM330 816l12-4-10 12zM810 490h8l-4 6zM822 520l8 6-8 4z"/>
        <path class="stream" d="M390 830l20-4M618 656l20 10-10 20M470 800l30 50M560 750l60 10 34 40M450 800l16 8"/>
        <path class="admin" d="M640 600L666 576 676 604 722 618 742 608 770 618 790 648 786 664 800 684 796 714 758 740 750 750 762 800 772 850 766 884M780 600L768 580 790 540 786 500 800 460 826 458M800 684L834 712 850 730 862 760 880 812M540 730L550 790 546 820 560 850 556 868M300 846L310 876 330 892 340 905M766 852L730 862 700 846 632 850 630 890 600 870 564 850 550 880 500 888 492 905M772 850L800 876 834 888"/>
        <path class="sea-border" d="M440 50l40 2q20 8 20 26v40q-6 24-30 20-14-4-24-24-30-30-26-46 4-16 20-18zM582 84q30-6 40 16l12 50q0 26-24 28-10 0-20-14l-26-40q-8-30 18-40zM930 42l30-10q24-2 38 20l10 100q0 36-30 42-20 2-32-22-20-50-32-106 0-14 16-24zM556 294q30-12 38 16 0 26-26 32-24 4-30-20 2-20 18-28zM108 276q20-10 40 0l158 112-56 86-98-44-76-74q-6-20 6-34zM322 408q26 0 40 20 10 30 0 50-14 30-44 30-24-4-32-30-10-50 12-64zM168 905L182 836 372 770 462 740 572 640 602 530 688 442 688 384 768 338 784 338 796 346 860 445 900 600 930 740 900 830 870 850 884 905"/>
        <path class="coast" d="M698 460l10-10-6 16M610 590l10 8M616 600l10 10M592 650l6 4M610 604l4 8M690 516l4 20-16 6M960 92l6 2M984 155l2 8-6 2"/>
      </g>

      <g class="town-mark">
        <circle cx="257" cy="540" r="2"/><circle cx="318" cy="557" r="1.300"/><circle cx="269" cy="670" r="2"/><circle cx="392" cy="671" r="1.500"/><circle cx="266" cy="766" r="2"/><circle cx="419" cy="757" r="1.500"/><circle cx="500" cy="649" r="2"/><circle cx="588" cy="608" r="1.500"/><circle cx="702" cy="610" r="2"/><circle cx="717" cy="554" r="1.500"/><circle cx="743" cy="615" r="1.500"/><circle cx="776" cy="645" r="2"/><circle cx="994" cy="542" r="2"/><circle cx="1014" cy="636" r="1.500"/><circle cx="1005" cy="731" r="2"/><circle cx="1049" cy="799" r="2"/><circle cx="999" cy="812" r="1.500"/><circle cx="1058" cy="705" r="1.500"/><circle cx="1195" cy="699" r="1.500"/><circle cx="1224" cy="709" r="1.500"/><circle cx="1239" cy="593" r="1.500"/><circle cx="1245" cy="633" r="1.500"/><circle cx="1250" cy="694" r="1.500"/><circle cx="1257" cy="753" r="1.500"/><circle cx="1462" cy="796" r="2"/><circle cx="1570" cy="667" r="1.500"/>
      </g>
      <circle cx="1005" cy="731" r="1" fill="#444"/>

      <g class="town">
        <text x="257" y="552">Luanda</text><text x="268" y="666">Lobito</text><text x="266" y="762">Lubango</text><text x="500" y="659">Luena</text><text x="702" y="605">Kolwezi</text><text x="776" y="640">Lubumbashi</text><text x="994" y="554">Mbeya</text><text class="under" x="964" y="714">Chipata</text><text x="1004" y="743">Lilongwe</text><text class="under" x="804" y="780">Lusaka</text><text x="1050" y="795">Blantyre</text><text x="1461" y="793">Mahajanga</text>
      </g>
      <g class="town town-small">
        <text x="318" y="566">N'dalatando</text><text x="379" y="674">Cuíto</text><text x="419" y="753">Menongue</text><text x="686" y="547">Kamina</text><text x="716" y="562">Bukama</text><text x="588" y="605">Dilolo</text><text x="743" y="624">Kambove</text><text class="under" x="968" y="566">Tunduma</text><text x="1014" y="634">Mzuzu</text><text class="under" x="811" y="757">Kabwe</text><text x="998" y="822">Tete</text><text x="1238" y="602">Mtwara</text><text x="1244" y="620">Mocímboa</text><text x="1244" y="629">da Praia</text><text x="1195" y="696">Montepuez</text><text x="1250" y="690">Pemba</text><text x="1058" y="702">Lichinga</text><text x="1224" y="718">Chiúre</text><text x="1256" y="762">Nacala</text><text x="1570" y="664">Antsiranana</text>
      </g>
      <g class="country">
        <text x="458" y="658">Angola</text><text x="702" y="704">Zambia</text><text x="1005" y="707">Malawi</text><text x="1374" y="652">Comores</text><text x="1374" y="664">Komori جزر</text><text x="1374" y="675">القمر</text>
      </g>
      <g class="province">
        <text x="268" y="568">Luanda</text><text x="327" y="549">Norte</text><text x="367" y="570">Malanje</text><text x="319" y="616">Cuanza</text><text x="319" y="626">Sul</text><text x="343" y="682">Huambo</text><text x="277" y="691">Benguela</text><text x="409" y="677">Bié</text><text x="322" y="766">Huíla</text><text x="235" y="788">Namibe</text><text x="343" y="821">Cunene</text><text x="613" y="575">Lualaba</text><text x="537" y="583">Lunda Sul</text><text x="788" y="606">Haut-Katanga</text><text x="502" y="712">Moxico</text><text x="483" y="799">Cuando</text><text x="483" y="808">Cubango</text><text x="636" y="793">Western</text><text x="636" y="803">Province</text><text x="750" y="831">Southern</text><text x="906" y="577">Northern</text><text x="906" y="586">Province</text><text x="1041" y="572">Njombe</text><text x="851" y="731">Central Province</text><text x="953" y="804">Tete</text><text x="926" y="831">Mashonaland</text><text x="1174" y="561">Lindi</text><text x="1092" y="604">Ruvuma</text><text x="1197" y="614">Mtwara</text><text x="1208" y="672">Cabo Delgado</text><text x="1098" y="711">Niassa</text><text x="1197" y="779">Nampula</text><text x="1563" y="701">Diana</text><text x="1585" y="749">Sava</text><text x="1530" y="784">Sofia</text><text x="1454" y="821">Boeny</text>
        <g class="under"><text x="920" y="628">Muchinga</text><text x="920" y="637">Province</text><text x="960" y="680">Eastern</text><text x="960" y="689">Province</text><text x="797" y="696">Copperbelt</text><text x="795" y="705">Province</text></g>
      </g>
      <g class="province lake"><text x="1031" y="654">Lake Malawi /</text><text x="1031" y="664">Lago Niassa</text></g>
    </svg>
    <button class="info-button" type="button" aria-label="Map attribution">
      <svg viewBox="0 0 12 12" aria-hidden="true"><circle cx="6" cy="6" r="6" fill="#222"/><path d="M5 2.500h2v1.600H5zM4.300 5h2.600v3.500h.8v1H4.300v-1H5V6h-.7z" fill="#fff"/></svg>
    </button>
    </div>
  </figure>

  <hr class="rule rule-bottom">
  <div class="notice">
    <svg class="bulb" viewBox="0 0 12 14" aria-hidden="true"><path d="M6 .5a4.500 4.500 0 0 1 4.500 4.500c0 2.500-2 3.500-2.500 5.500H4C3.500 8.500 1.500 7.500 1.500 5A4.500 4.500 0 0 1 6 .5z" fill="#fdc743"/><ellipse cx="5" cy="4" rx="2" ry="2.500" fill="#ffe27a"/><path d="M4 10.500h4v2q-2 2-4 0z" fill="#a58fa5"/></svg>
    <p>Navigate to <strong>Program Monitoring</strong>, <strong>Strategic Planning</strong>, or <strong>Policy Simulation</strong> for deeper insights and interactive tools.</p>
  </div>
</main>
</body>
</html>
```
FILE: styles.css
```css
* { box-sizing: border-box; }

body {
  margin: 0;
  background: #fff;
  color: #31333f;
  font-family: "Source Sans Pro", "Noto Sans CJK SC", "Noto Sans", sans-serif;
  font-size: 11px;
  line-height: 20px;
}

p, h1, h2, ul, figure { margin: 0; padding: 0; }
strong { font-weight: 600; }

.page { padding: 91px 64px 128px; }

.title {
  display: flex;
  align-items: center;
  gap: 9px;
  height: 42px;
  padding-left: 1px;
  font-size: 31px;
  line-height: 42px;
  font-weight: 700;
}
.title-icon { width: 46px; height: 46px; flex: none; }

.intro { margin-top: 14px; }

.rule {
  height: 1px;
  margin: 27px 0 0;
  border: 0;
  background: #d6d6d9;
}

.metrics {
  display: grid;
  grid-template-columns: repeat(3, 1fr);
  gap: 13px;
  margin-top: 27px;
}
.metric-label {
  display: flex;
  align-items: center;
  gap: 4px;
  padding-left: 2px;
  font-size: 10px;
  line-height: 18px;
}
.emoji-small { width: 12px; height: 12px; flex: none; }
.metric-value { font-size: 26px; line-height: 36px; }

.delta {
  display: inline-flex;
  align-items: center;
  gap: 3px;
  height: 19px;
  margin-top: 5px;
  padding: 0 5px;
  border-radius: 10px;
  font-size: 10px;
  line-height: 19px;
  vertical-align: top;
}
.delta-up { background: #e8f9ee; color: #158237; }
.delta-down { background: #ffe9e9; color: #ff2b2b; }
.arrow {
  width: 8px;
  height: 8px;
  fill: none;
  stroke: currentColor;
  stroke-width: 1.5;
}
.arrow-small { width: 7px; height: 7px; }

.heading {
  display: flex;
  align-items: center;
  gap: 8px;
  margin-top: 24px;
  padding-left: 3px;
  font-size: 19px;
  line-height: 26px;
  font-weight: 600;
}
.heading-icon { width: 24px; height: 24px; flex: none; }
.heading-map { margin-top: 22px; }

.highlights {
  margin-top: 14px;
  padding-left: 18px;
  line-height: 23px;
}

.map { margin-top: 12px; }
.map-title { padding-left: 3px; font-weight: 700; }
.map-frame { position: relative; margin-top: 7px; }
.map-canvas { display: block; width: 100%; height: auto; overflow: hidden; }

.land { fill: #f2efe9; }
.water { fill: #aad3df; }
.wood { fill: #bddab1; }
.sparse { fill: #cbdfbd; }
.grass { fill: #d6efbf; }
.islet { fill: #eef0dd; }
.scrub { fill: none; stroke: #dce8c9; stroke-width: 2; }
.stream { fill: none; stroke: #a9d3e3; stroke-width: 3; }
.road { fill: none; stroke: #fbd5ca; stroke-width: 2; }
.admin { fill: none; stroke: #cdbbd0; stroke-width: 3; stroke-linejoin: round; }
.strong-admin { stroke-width: 5; }
.nation { fill: none; stroke: #c2adc4; stroke-width: 6; stroke-linejoin: round; }
.coast { fill: none; stroke: #b9a9c4; stroke-width: 3; }
.coast-land { stroke: #b9a9c4; stroke-width: 3; }
.sea-border { fill: none; stroke: #9b9abc; stroke-width: 5; stroke-linejoin: round; }
.dot { fill: none; stroke: #0068c9; stroke-width: 12; stroke-linecap: round; }

.town-mark { fill: #f2efe9; stroke: #777; stroke-width: 1; }
.town, .country, .province {
  font-family: "Noto Sans", sans-serif;
  text-anchor: middle;
  paint-order: stroke;
  stroke: rgba(255, 255, 255, 0.6);
  stroke-width: 2px;
}
.town { font-size: 10px; fill: #444; }
.town-small { font-size: 8px; }
.country { font-size: 10px; fill: #8d6591; }
.province { font-size: 8px; font-style: italic; fill: #9a75a5; }
.lake { fill: #5b92cb; }
.under { stroke: none; opacity: 0.75; }

.info-button {
  position: absolute;
  right: 8px;
  bottom: 8px;
  width: 19px;
  height: 19px;
  padding: 3px;
  border: 0;
  border-radius: 50%;
  background: rgba(255, 255, 255, 0.8);
}
.info-button svg { display: block; width: 13px; height: 13px; }

.rule-bottom { margin-top: 38px; }

.notice {
  display: flex;
  align-items: center;
  gap: 6px;
  margin-top: 26px;
  padding: 12px 15px;
  border-radius: 6px;
  background: #e8f2fc;
  color: #004280;
  line-height: 21px;
}
.bulb { width: 12px; height: 14px; flex: none; }
```
